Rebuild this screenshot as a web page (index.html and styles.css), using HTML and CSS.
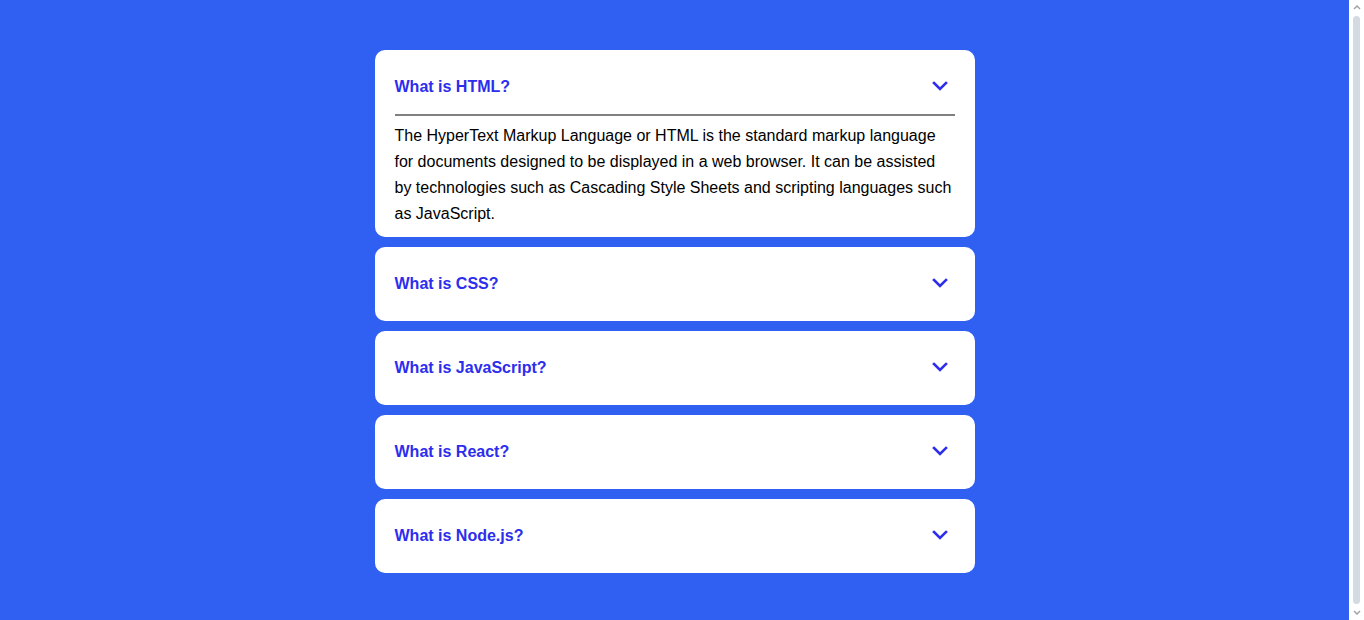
FILE: index.html
```html
<!DOCTYPE html>
<html lang="en">
<head>
<meta charset="utf-8">
<title>FAQ</title>
<link rel="stylesheet" href="styles.css">
</head>
<body>
<main class="faq">
  <section class="item open">
    <div class="question">
      <h3>What is HTML?</h3>
      <svg class="chev" viewBox="0 0 16 10" width="16" height="10"><polyline points="2,2 8,8 14,2"/></svg>
    </div>
    <div class="answer">
      <p>The HyperText Markup Language or HTML is the standard markup language for documents designed to be displayed in a web browser. It can be assisted by technologies such as Cascading Style Sheets and scripting languages such as JavaScript.</p>
    </div>
  </section>
  <section class="item">
    <div class="question">
      <h3>What is CSS?</h3>
      <svg class="chev" viewBox="0 0 16 10" width="16" height="10"><polyline points="2,2 8,8 14,2"/></svg>
    </div>
  </section>
  <section class="item">
    <div class="question">
      <h3>What is JavaScript?</h3>
      <svg class="chev" viewBox="0 0 16 10" width="16" height="10"><polyline points="2,2 8,8 14,2"/></svg>
    </div>
  </section>
  <section class="item">
    <div class="question">
      <h3>What is React?</h3>
      <svg class="chev" viewBox="0 0 16 10" width="16" height="10"><polyline points="2,2 8,8 14,2"/></svg>
    </div>
  </section>
  <section class="item">
    <div class="question">
      <h3>What is Node.js?</h3>
      <svg class="chev" viewBox="0 0 16 10" width="16" height="10"><polyline points="2,2 8,8 14,2"/></svg>
    </div>
  </section>
</main>
<div class="scrollbar" aria-hidden="true">
  <svg class="sb-arrow" viewBox="0 0 8 5" width="8" height="5"><polyline points="1,4 4,1 7,4"/></svg>
  <div class="sb-thumb"></div>
  <svg class="sb-arrow" viewBox="0 0 8 5" width="8" height="5"><polyline points="1,1 4,4 7,1"/></svg>
</div>
</body>
</html>
```

FILE: styles.css
```css
html, body {
  margin: 0;
  padding: 0;
}
body {
  background: #3060f1;
  font-family: "Liberation Sans", Arial, sans-serif;
  padding: 50px 15px 50px 0;
}
.faq {
  width: 600px;
  margin: 0 auto;
  display: flex;
  flex-direction: column;
  gap: 10px;
}
.item {
  background: #fff;
  border-radius: 10px;
  padding: 20px;
}
.question {
  height: 34px;
  display: flex;
  align-items: center;
  justify-content: space-between;
}
.question h3 {
  margin: 0;
  font-size: 16px;
  font-weight: bold;
  color: #2d2ded;
}
.chev {
  margin-right: 7px;
  margin-bottom: 3px;
  fill: none;
  stroke: #2d2ded;
  stroke-width: 2.6;
  stroke-linecap: square;
}
.answer {
  margin-top: 10px;
  border-top: 2px solid #808080;
  padding-top: 7px;
  margin-bottom: -10px;
}
.answer p {
  margin: 0;
  font-size: 16px;
  line-height: 26px;
  color: #000;
}
.scrollbar {
  position: fixed;
  top: 0;
  right: 0;
  width: 15px;
  height: 100%;
  background: #fff;
  display: flex;
  flex-direction: column;
  align-items: center;
  padding: 5px 0;
  box-sizing: border-box;
  gap: 6px;
}
.sb-arrow {
  fill: none;
  stroke: #a3a3a3;
  stroke-width: 1.5;
  flex: none;
}
.sb-thumb {
  flex: 1;
  width: 7px;
  background: #d4dae2;
  border-radius: 4px;
}
```
